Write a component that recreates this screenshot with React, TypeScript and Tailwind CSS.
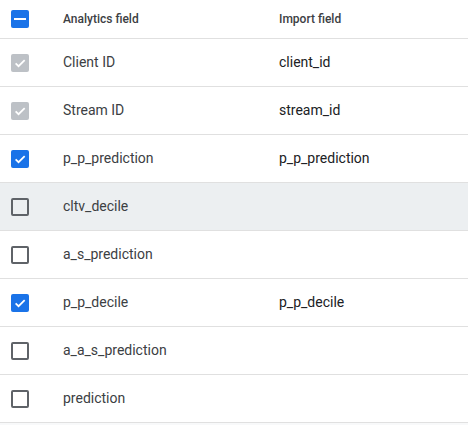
import React from "react";

type State = "checked" | "disabled" | "unchecked" | "indeterminate";

function Box({ state }: { state: State }) {
  if (state === "unchecked") {
    return <div className="w-[18px] h-[18px] rounded-[2px] border-2 border-[#5f6368] box-border" />;
  }
  const bg = state === "disabled" ? "bg-[#bdc1c6]" : "bg-[#1a73e8]";
  return (
    <div className={`w-[18px] h-[18px] rounded-[2px] ${bg} flex items-center justify-center`}>
      {state === "indeterminate" ? (
        <div className="w-[12px] h-[2px] bg-white" />
      ) : (
        <svg width="14" height="14" viewBox="0 0 24 24" fill="none">
          <path d="M4.5 12.5l5 5L20 7" stroke="white" strokeWidth="3" />
        </svg>
      )}
    </div>
  );
}

const rows: { name: string; imp: string; state: State; hover?: boolean }[] = [
  { name: "Client ID", imp: "client_id", state: "disabled" },
  { name: "Stream ID", imp: "stream_id", state: "disabled" },
  { name: "p_p_prediction", imp: "p_p_prediction", state: "checked" },
  { name: "cltv_decile", imp: "", state: "unchecked", hover: true },
  { name: "a_s_prediction", imp: "", state: "unchecked" },
  { name: "p_p_decile", imp: "p_p_decile", state: "checked" },
  { name: "a_a_s_prediction", imp: "", state: "unchecked" },
  { name: "prediction", imp: "", state: "unchecked" },
];

export default function App() {
  return (
    <div className="w-[468px] h-[425px] bg-white overflow-hidden" style={{ fontFamily: "Roboto, 'Noto Sans', sans-serif" }}>
      <div className="flex items-center h-[39px] border-b border-[#e0e0e0]">
        <div className="w-[63px] pl-[11px] flex items-center">
          <Box state="indeterminate" />
        </div>
        <div className="w-[216px] text-[12px] font-medium text-[#3c4043]">Analytics field</div>
        <div className="text-[12px] font-medium text-[#3c4043]">Import field</div>
      </div>
      {rows.map((r) => (
        <div
          key={r.name}
          className={`flex items-center h-[48px] border-b border-[#e0e0e0] ${r.hover ? "bg-[#eceff1]" : ""}`}
        >
          <div className="w-[63px] pl-[11px] flex items-center">
            <Box state={r.state} />
          </div>
          <div className="w-[216px] text-[14px] text-[#3c4043]">{r.name}</div>
          <div className="text-[14px] text-[#202124]">{r.imp}</div>
        </div>
      ))}
      <div className="h-[10px] bg-[#f8f9fa]" />
    </div>
  );
}
